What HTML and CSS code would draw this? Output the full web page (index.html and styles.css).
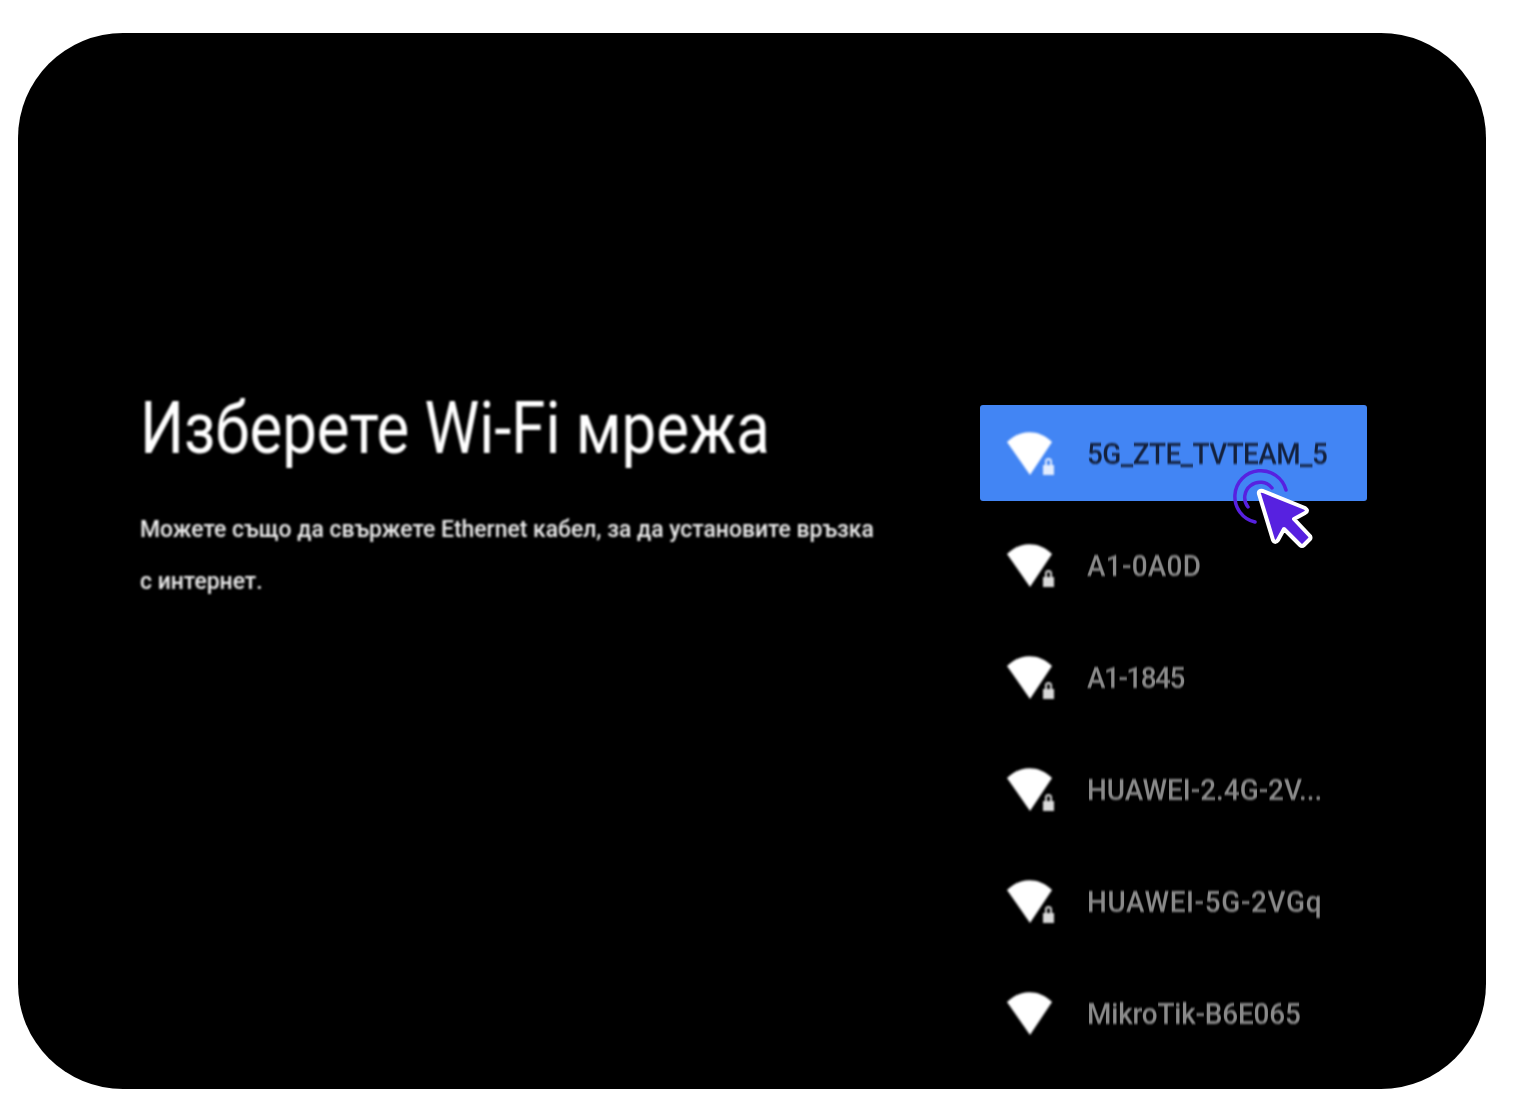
FILE: index.html
```html
<!DOCTYPE html>
<html lang="bg">
<head>
    <meta charset="UTF-8">
    <title>Wi-Fi</title>
    <link rel="stylesheet" href="styles.css">
</head>
<body>
    <div class="screen">
        <div class="intro">
            <h1>Изберете Wi-Fi мрежа</h1>
            <p>Можете също да свържете Ethernet кабел, за да установите връзка<br>с интернет.</p>
        </div>
        <div class="networks">
            <div class="network selected">
                <svg class="wifi" viewBox="0 0 48 44"><path class="wave" d="M0 11C13 -2 32 -2 45 11L23 44Z"/><path class="lock" d="M38 34v-3.500a3.500 3.500 0 0 1 7 0V34h2v10H36V34ZM40 34h3v-3.500a1.500 1.500 0 0 0-3 0Z"/></svg>
                <span class="name name-tight">5G_ZTE_TVTEAM_5</span>
                <svg class="pointer" viewBox="0 0 90 90">
                    <path class="ring" d="M31 59A26 26 0 1 1 62 27"/>
                    <path class="ring" d="M24 44A14 14 0 0 1 48 25"/>
                    <path class="arrow" d="M35 31Q34 27 39 28L81 45Q85 48 81 50L70 56L86 73Q87 75 86 76L80 82Q78 84 76 82L60 66L54 77Q51 81 49 77Z"/>
                </svg>
            </div>
            <div class="network">
                <svg class="wifi" viewBox="0 0 48 44"><path class="wave" d="M0 11C13 -2 32 -2 45 11L23 44Z"/><path class="lock" d="M38 34v-3.500a3.500 3.500 0 0 1 7 0V34h2v10H36V34ZM40 34h3v-3.500a1.500 1.500 0 0 0-3 0Z"/></svg>
                <span class="name name-wide">A1-0A0D</span>
            </div>
            <div class="network">
                <svg class="wifi" viewBox="0 0 48 44"><path class="wave" d="M0 11C13 -2 32 -2 45 11L23 44Z"/><path class="lock" d="M38 34v-3.500a3.500 3.500 0 0 1 7 0V34h2v10H36V34ZM40 34h3v-3.500a1.500 1.500 0 0 0-3 0Z"/></svg>
                <span class="name name-tighter">A1-1845</span>
            </div>
            <div class="network">
                <svg class="wifi" viewBox="0 0 48 44"><path class="wave" d="M0 11C13 -2 32 -2 45 11L23 44Z"/><path class="lock" d="M38 34v-3.500a3.500 3.500 0 0 1 7 0V34h2v10H36V34ZM40 34h3v-3.500a1.500 1.500 0 0 0-3 0Z"/></svg>
                <span class="name">HUAWEI-2.4G-2V...</span>
            </div>
            <div class="network">
                <svg class="wifi" viewBox="0 0 48 44"><path class="wave" d="M0 11C13 -2 32 -2 45 11L23 44Z"/><path class="lock" d="M38 34v-3.500a3.500 3.500 0 0 1 7 0V34h2v10H36V34ZM40 34h3v-3.500a1.500 1.500 0 0 0-3 0Z"/></svg>
                <span class="name name-wider">HUAWEI-5G-2VGq</span>
            </div>
            <div class="network">
                <svg class="wifi" viewBox="0 0 48 44"><path class="wave" d="M0 11C13 -2 32 -2 45 11L23 44Z"/></svg>
                <span class="name name-slim">MikroTik-B6E065</span>
            </div>
        </div>
    </div>
</body>
</html>
```

FILE: styles.css
```css
* {
    box-sizing: border-box;
}
body {
    margin: 0;
    height: 1116px;
    padding: 33px 28px 27px 18px;
    background-color: #fff;
    font-family: 'Roboto', sans-serif;
    overflow: hidden;
}
.screen {
    display: flex;
    justify-content: space-between;
    width: 1468px;
    height: 1056px;
    padding: 372px 119px 0 122px;
    background-color: #000;
    border-radius: 105px;
    overflow: hidden;
}
.intro {
    width: 760px;
    color: #fff;
    filter: blur(0.8px);
}
h1 {
    margin: -1px 0 -1px;
    font-size: 72px;
    font-weight: 400;
    line-height: 50px;
    white-space: nowrap;
    transform: scaleX(0.857);
    transform-origin: left;
}
p {
    margin: 50px 0 0;
    font-size: 24px;
    font-weight: 500;
    line-height: 52px;
    color: #eee;
    white-space: nowrap;
    transform: scaleX(0.955);
    transform-origin: left;
}
.networks {
    display: flex;
    flex-direction: column;
    gap: 16px;
    width: 387px;
}
.network {
    position: relative;
    display: flex;
    align-items: center;
    flex-shrink: 0;
    height: 96px;
    padding-left: 27px;
    border-radius: 3px;
    color: #8a8a8a;
}
.selected {
    background-color: #4285f4;
    color: #14213d;
}
.wifi {
    width: 48px;
    height: 44px;
    margin-right: 32px;
    filter: blur(0.8px);
}
.wave {
    fill: #fff;
}
.lock {
    fill: #fff;
    fill-rule: evenodd;
    opacity: 0.85;
}
.name {
    font-size: 30px;
    font-weight: 500;
    white-space: nowrap;
    transform: scaleX(0.93);
    transform-origin: left;
    filter: blur(0.8px);
}
.name-slim {
    letter-spacing: -0.2px;
}
.name-tight {
    letter-spacing: -0.6px;
}
.name-tighter {
    letter-spacing: -1.6px;
}
.name-wide {
    letter-spacing: 0.3px;
}
.name-wider {
    letter-spacing: 0.7px;
}
.pointer {
    position: absolute;
    left: 244px;
    top: 58px;
    width: 90px;
    height: 90px;
    overflow: visible;
}
.ring {
    fill: none;
    stroke: #5721e0;
    stroke-width: 3.5;
    stroke-linecap: round;
}
.arrow {
    fill: #5721e0;
    stroke: #fff;
    stroke-width: 4;
    stroke-linejoin: round;
}
```
